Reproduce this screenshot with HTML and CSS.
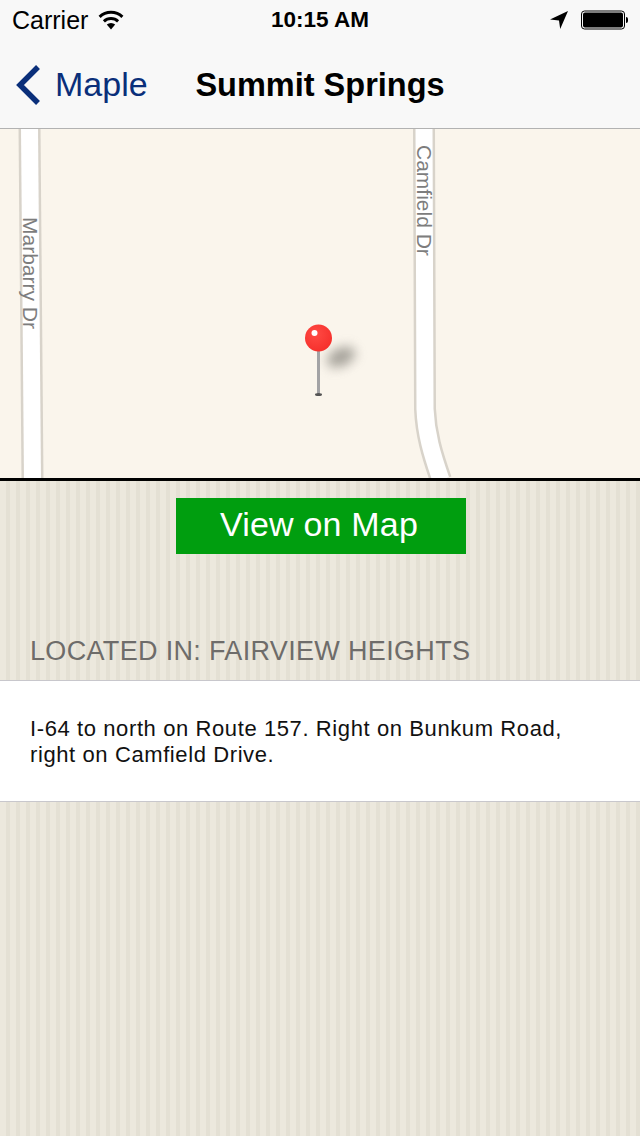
FILE: index.html
```html
<!DOCTYPE html>
<html lang="en">
<head>
    <meta charset="UTF-8">
    <meta name="viewport" content="width=device-width, initial-scale=1.0">
    <title>Summit Springs</title>
    <link rel="stylesheet" href="styles.css">
</head>
<body>

    <header class="top-bar">
        <div class="status-bar">
            <div class="status-left">
                <span>Carrier</span>
                <svg class="wifi" width="26" height="20" viewBox="0 0 26 20">
                    <path d="M13 19.5 L8.8 14.6 A6.4 6.4 0 0 1 17.2 14.6 Z" fill="#000"/>
                    <path d="M5.9 11.4 A10.4 10.4 0 0 1 20.1 11.4" fill="none" stroke="#000" stroke-width="3"/>
                    <path d="M1.6 6.8 A16.4 16.4 0 0 1 24.4 6.8" fill="none" stroke="#000" stroke-width="3"/>
                </svg>
            </div>
            <div class="status-time">10:15 AM</div>
            <div class="status-right">
                <svg width="20" height="20" viewBox="0 0 20 20">
                    <path d="M19 1 L1 9.6 L10 10.6 L11.2 19 Z" fill="#000"/>
                </svg>
                <svg width="47" height="20" viewBox="0 0 47 20">
                    <rect x="0.5" y="1" width="43" height="18" rx="3" fill="none" stroke="#000" stroke-width="1"/>
                    <rect x="2" y="2.5" width="40" height="15" rx="2" fill="#000"/>
                    <path d="M45 7 a2 2 0 0 1 2 2 v2 a2 2 0 0 1 -2 2 Z" fill="#000"/>
                </svg>
            </div>
        </div>
        <nav class="nav-bar">
            <a class="back-link" href="#">
                <svg width="26" height="40" viewBox="0 0 26 40">
                    <path d="M23 2 L5 20 L23 38" fill="none" stroke="#0a2f7a" stroke-width="5.5"/>
                </svg>
                <span class="back-text">Maple</span>
            </a>
            <h1 class="nav-title">Summit Springs</h1>
        </nav>
    </header>

    <main>
        <section class="map">
            <svg class="map-canvas" width="640" height="349" viewBox="0 0 640 349">
                <!-- roads -->
                <path class="road-edge" d="M29.5 -2 L32.5 351"/>
                <path class="road" d="M29.5 -2 L32.5 351"/>
                <path class="road-edge" d="M424 -2 L425 280 C426 305 432 325 441 351"/>
                <path class="road" d="M424 -2 L425 280 C426 305 432 325 441 351"/>
                <text class="road-name" transform="translate(23 88) rotate(90)">Marbarry Dr</text>
                <text class="road-name" transform="translate(417 16) rotate(90)">Camfield Dr</text>
            </svg>
            <svg class="pin" width="70" height="80" viewBox="0 0 70 80">
                <defs>
                    <radialGradient id="pinHead" cx="0.4" cy="0.35" r="0.7">
                        <stop offset="0" stop-color="#ff4a44"/>
                        <stop offset="1" stop-color="#f52f2b"/>
                    </radialGradient>
                    <filter id="pinBlur" x="-100%" y="-100%" width="300%" height="300%"><feGaussianBlur stdDeviation="6"/></filter>
                </defs>
                <ellipse cx="37" cy="33" rx="15" ry="9" fill="#77746d" opacity="0.65" filter="url(#pinBlur)" transform="rotate(-25 37 33)"/>
                <rect x="13" y="26" width="3" height="44" fill="#a3a3a5"/>
                <ellipse cx="14.5" cy="70.5" rx="3.5" ry="1.5" fill="#555"/>
                <circle cx="14.5" cy="14" r="13.5" fill="url(#pinHead)"/>
                <circle cx="10.5" cy="9" r="3" fill="#fff"/>
            </svg>
        </section>

        <div class="actions">
            <a class="map-button" href="#">View on Map</a>
        </div>

        <h2 class="section-label">LOCATED IN: FAIRVIEW HEIGHTS</h2>
        <div class="directions">
            <p>I-64 to north on Route 157. Right on Bunkum Road, right on Camfield Drive.</p>
        </div>
    </main>

</body>
</html>
```
FILE: styles.css
```css
/* General styling */
body {
    margin: 0;
    width: 640px;
    height: 1136px;
    overflow: hidden;
    font-family: 'Liberation Sans', Arial, sans-serif;
    color: #000;
    background-color: #ece8dd;
    background-image: repeating-linear-gradient(90deg, #ece8dd 0, #ece8dd 6px, #e4e0d4 6px, #e4e0d4 10px);
}

/* Status bar and nav */
.top-bar {
    background-color: #f8f8f8;
    border-bottom: 1px solid #b2b2b2;
}

.status-bar {
    display: grid;
    grid-template-columns: 1fr auto 1fr;
    align-items: center;
    height: 40px;
    padding: 0 12px;
    font-size: 22.5px;
}

.status-left {
    display: flex;
    align-items: center;
    gap: 10px;
    font-size: 25px;
}

.status-time {
    font-weight: bold;
}

.status-right {
    display: flex;
    justify-content: flex-end;
    align-items: center;
    gap: 12px;
}

.nav-bar {
    position: relative;
    display: flex;
    align-items: center;
    height: 88px;
    padding-top: 2px;
    box-sizing: border-box;
}

.back-link {
    display: flex;
    align-items: center;
    gap: 14px;
    margin-left: 15px;
    font-size: 34px;
    color: #0a2f7a;
    text-decoration: none;
}

.back-text {
    margin-bottom: 2px;
}

.nav-title {
    position: absolute;
    left: 0;
    right: 0;
    margin: 0;
    text-align: center;
    font-size: 32.5px;
    font-weight: bold;
}

/* Map */
.map {
    position: relative;
    height: 349px;
    background-color: #faf5ec;
    border-bottom: 3px solid #000;
    overflow: hidden;
}

.map-canvas {
    display: block;
}

.road {
    fill: none;
    stroke: #fff;
    stroke-width: 17;
}

.road-edge {
    fill: none;
    stroke: #d8d3ca;
    stroke-width: 22;
}

.road-name {
    font-size: 21px;
    fill: #7d7d7d;
}

.pin {
    position: absolute;
    left: 304px;
    top: 195px;
}

/* Button */
.actions {
    display: flex;
    padding: 17px 0 0 176px;
}

.map-button {
    box-sizing: border-box;
    width: 290px;
    height: 56px;
    padding-right: 4px;
    line-height: 52px;
    text-align: center;
    font-size: 34px;
    letter-spacing: 0.2px;
    color: #fff;
    text-decoration: none;
    background-color: #009e0f;
}

/* Directions */
.section-label {
    margin: 81px 0 0;
    padding: 0 30px 12px;
    font-size: 27px;
    letter-spacing: 0.33px;
    line-height: 33px;
    font-weight: normal;
    color: #6e6c6a;
}

.directions {
    box-sizing: border-box;
    height: 122px;
    padding: 35px 60px 0 30px;
    background-color: #fff;
    border-top: 1px solid #c8c7cc;
    border-bottom: 1px solid #c8c7cc;
}

.directions p {
    margin: 0;
    font-size: 22px;
    line-height: 26px;
    letter-spacing: 0.6px;
    color: #111;
}
```
